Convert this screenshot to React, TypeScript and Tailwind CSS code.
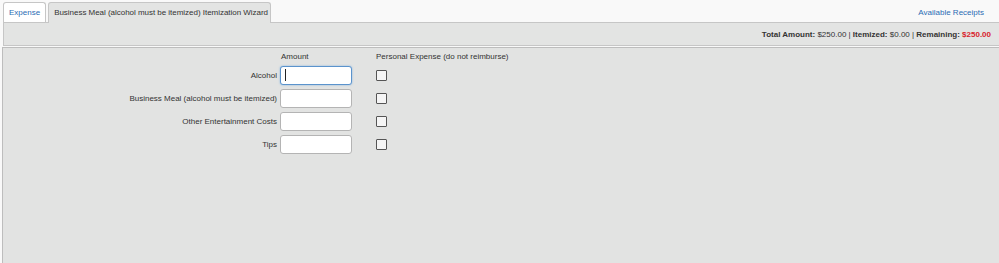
import React from 'react'

const rows = [
  { label: 'Alcohol', focused: true },
  { label: 'Business Meal (alcohol must be itemized)', focused: false },
  { label: 'Other Entertainment Costs', focused: false },
  { label: 'Tips', focused: false },
]

function AmountInput({ focused }: { focused: boolean }) {
  return (
    <div className="relative">
      <input
        type="text"
        readOnly
        className={
          focused
            ? 'block w-[72px] h-[19px] rounded-[3px] border border-[#5b93cc] bg-white shadow-[0_0_2px_#7fb0e0] outline-none'
            : 'block w-[72px] h-[19px] rounded-[3px] border border-[#b4b4b4] bg-white outline-none'
        }
      />
      {focused && <span className="absolute left-[5px] top-[3px] h-[12px] w-px bg-[#222]" />}
    </div>
  )
}

export default function App() {
  return (
    <div className="h-[263px] overflow-hidden bg-[#f9f9f9] font-['Liberation_Sans',Arial,sans-serif] text-[8px] leading-[10px] text-[#333]">
      {/* tabs */}
      <div className="flex h-[22px] items-end pl-[3px] pr-[15px] pt-[2px]">
        <div className="flex h-[20px] items-center rounded-t-[3px] border border-b-0 border-[#c6c6c6] bg-white px-[5px] pt-px text-[#2b6cb4]">
          Expense
        </div>
        <div className="relative z-10 -mb-px ml-[2px] flex h-[21px] items-center rounded-t-[3px] border border-b-0 border-[#c6c6c6] bg-[#e3e4e3] pl-[5px] pr-[2px] tracking-[-0.03px]">
          Business Meal (alcohol must be itemized) Itemization Wizard
        </div>
        <span className="mb-[4px] ml-auto text-[#2b6cb4]">Available Receipts</span>
      </div>

      {/* totals bar */}
      <div className="ml-[3px] flex h-[24px] items-center justify-end border border-r-0 border-[#c6c6c6] bg-[#e3e4e3] pr-[8px] pt-px">
        <span className="font-bold">Total Amount:</span>
        <span>&nbsp;$250.00 |&nbsp;</span>
        <span className="font-bold">Itemized:</span>
        <span>&nbsp;$0.00 |&nbsp;</span>
        <span className="font-bold">Remaining:</span>
        <span className="font-bold text-[#d81e2c]">&nbsp;$250.00</span>
      </div>

      {/* itemization form */}
      <div className="ml-[2px] mt-[1px] h-full border-l border-t border-[#bdbdbd] bg-[#e2e3e2] pt-[2px]">
        <div className="flex h-[13px] items-center">
          <div className="w-[274px]" />
          <div className="ml-[4px] w-[71px]">Amount</div>
          <div className="ml-[24px]">Personal Expense (do not reimburse)</div>
        </div>
        <div className="mt-[3px] flex flex-col gap-[4px]">
          {rows.map((r) => (
            <div key={r.label} className="flex items-center">
              <label className="w-[274px] text-right">{r.label}</label>
              <div className="ml-[3px]">
                <AmountInput focused={r.focused} />
              </div>
              <input
                type="checkbox"
                readOnly
                className="ml-[24px] h-[11px] w-[11px] appearance-none rounded-[1px] border border-[#555] bg-[#f5f5f5]"
              />
            </div>
          ))}
        </div>
      </div>
    </div>
  )
}
